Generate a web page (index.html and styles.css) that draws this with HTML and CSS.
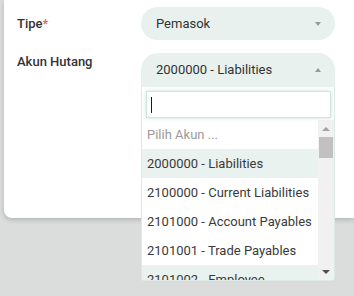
FILE: index.html
```html
<!DOCTYPE html>
<html>
<head>
<meta charset="utf-8">
<link rel="stylesheet" href="styles.css">
</head>
<body>
<div class="card">
  <div class="row row-center">
    <div class="label">Tipe<span class="req">*</span></div>
    <div class="select">
      <span class="value">Pemasok</span>
      <span class="caret caret-down"></span>
    </div>
  </div>
  <div class="row">
    <div class="label">Akun Hutang</div>
    <div class="select open">
      <span class="value">2000000 - Liabilities</span>
      <span class="caret caret-up"></span>
    </div>
  </div>
  <div class="dropdown">
    <div class="search"><span class="cursor"></span></div>
    <div class="results">
      <ul class="list">
        <li class="item placeholder">Pilih Akun ...</li>
        <li class="item hl">2000000 - Liabilities</li>
        <li class="item">2100000 - Current Liabilities</li>
        <li class="item">2101000 - Account Payables</li>
        <li class="item">2101001 - Trade Payables</li>
        <li class="item hl">2101002 - Employee</li>
      </ul>
      <div class="scrollbar">
        <span class="sb-btn"><span class="tri-up"></span></span>
        <span class="thumb"></span>
        <span class="sb-fill"></span>
        <span class="sb-btn"><span class="tri-down"></span></span>
      </div>
    </div>
  </div>
</div>
</body>
</html>
```
FILE: styles.css
```css
html, body {
  margin: 0;
  padding: 0;
}
body {
  background: #dadddc;
  width: 354px;
  height: 296px;
  overflow: hidden;
  font-family: Roboto, "Liberation Sans", sans-serif;
}
.card {
  position: relative;
  margin-left: 4px;
  width: 350px;
  height: 218px;
  background: #fff;
  border-radius: 0 0 0 8px;
  box-shadow: 0 2px 5px rgba(0, 0, 0, 0.18);
  padding: 7px 0 0 13px;
  box-sizing: border-box;
}
.row {
  display: flex;
  align-items: flex-start;
  margin-bottom: 13px;
}
.row-center {
  align-items: center;
}
.label {
  width: 124px;
  font-size: 13px;
  font-weight: 500;
  line-height: 18px;
  color: #333;
}
.req {
  color: #e0605a;
}
.select {
  width: 194px;
  height: 33px;
  box-sizing: border-box;
  border-radius: 17px;
  background: #e8f1ee;
  display: flex;
  align-items: center;
  justify-content: space-between;
  padding: 0 14px 0 15px;
  font-size: 13px;
  color: #333;
}
.select.open {
  height: 34px;
  border-radius: 17px 17px 0 0;
  padding-bottom: 1px;
}
.caret {
  width: 0;
  height: 0;
  border-left: 3.5px solid transparent;
  border-right: 3.5px solid transparent;
}
.caret-down {
  border-top: 4px solid #9a9a9a;
}
.caret-up {
  border-bottom: 4px solid #9a9a9a;
}
.dropdown {
  position: absolute;
  left: 137px;
  top: 87px;
  width: 194px;
  height: 194px;
  box-sizing: border-box;
  background: #fff;
  border: 1px solid #dde9e4;
  border-top: none;
  border-radius: 0 0 4px 4px;
  display: flex;
  flex-direction: column;
  overflow: hidden;
}
.search {
  margin: 4px 3px 2px 4px;
  height: 27px;
  box-sizing: border-box;
  border: 1px solid #cfe5db;
  box-shadow: 0 0 4px rgba(130, 190, 165, 0.45);
  display: flex;
  align-items: center;
  padding-left: 4px;
}
.cursor {
  width: 1px;
  height: 16px;
  background: #1a1a1a;
}
.results {
  flex: 1;
  display: flex;
  overflow: hidden;
}
.list {
  list-style: none;
  margin: 0;
  padding: 0;
  flex: 1;
}
.item {
  height: 29px;
  line-height: 29px;
  padding-left: 5px;
  font-size: 13px;
  color: #3a3a3a;
  white-space: nowrap;
}
.item.placeholder {
  color: #9a9a9a;
}
.item.hl {
  background: #eaf2ef;
}
.scrollbar {
  width: 16px;
  background: #f1f1f1;
  display: flex;
  flex-direction: column;
  align-items: center;
}
.sb-btn {
  height: 17px;
  width: 16px;
  display: flex;
  align-items: center;
  justify-content: center;
}
.tri-up {
  width: 0;
  height: 0;
  border-left: 4px solid transparent;
  border-right: 4px solid transparent;
  border-bottom: 4px solid #a3a3a3;
}
.tri-down {
  width: 0;
  height: 0;
  border-left: 4px solid transparent;
  border-right: 4px solid transparent;
  border-top: 4px solid #505050;
}
.thumb {
  width: 14px;
  height: 21px;
  background: #c1c1c1;
}
.sb-fill {
  flex: 1;
}
```
